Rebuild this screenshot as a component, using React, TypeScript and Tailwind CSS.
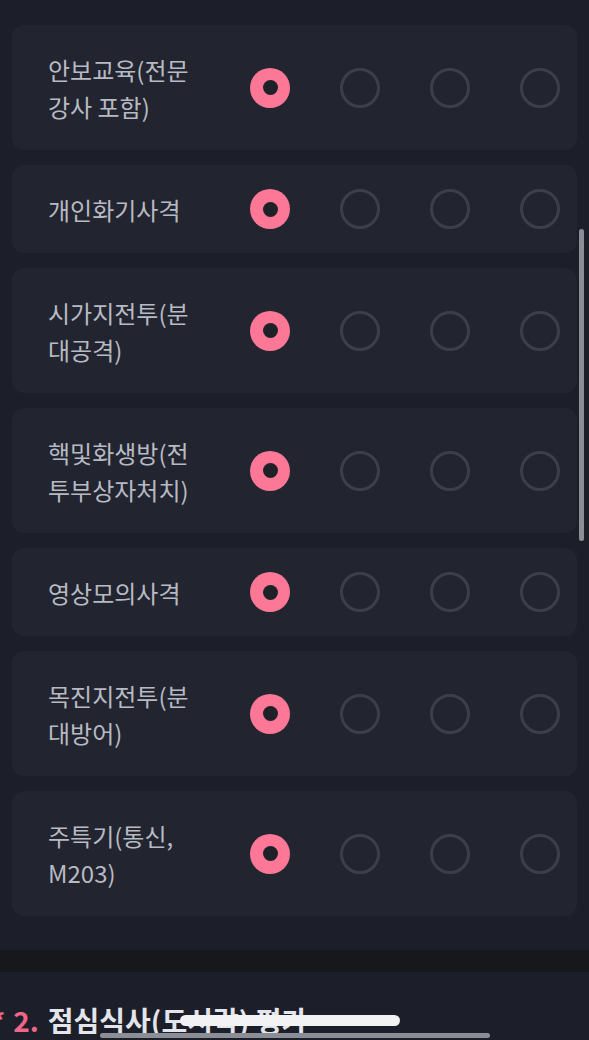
import React from "react";

const items: { label: string; sel: number }[] = [
  { label: "안보교육(전문 강사 포함)", sel: 0 },
  { label: "개인화기사격", sel: 0 },
  { label: "시가지전투(분대공격)", sel: 0 },
  { label: "핵및화생방(전투부상자처치)", sel: 0 },
  { label: "영상모의사격", sel: 0 },
  { label: "목진지전투(분대방어)", sel: 0 },
  { label: "주특기(통신, M203)", sel: 0 },
];

function Radio({ on }: { on: boolean }) {
  if (on) {
    return (
      <div className="w-[40px] h-[40px] rounded-full bg-[#fd7896] flex items-center justify-center shrink-0">
        <div className="w-[15px] h-[15px] rounded-full bg-[#1f2129]" />
      </div>
    );
  }
  return <div className="w-[40px] h-[40px] rounded-full border-[3px] border-[#3b3f49] shrink-0" />;
}

export default function App() {
  return (
    <div
      className="relative h-[1040px] overflow-hidden bg-[#1c1f29]"
      style={{ fontFamily: '"Noto Sans CJK KR", "Noto Sans", sans-serif' }}
    >
      <div className="px-3 pt-[25px] flex flex-col gap-[15px]">
        {items.map((it, i) => (
          <div
            key={i}
            className="flex items-center rounded-[12px] bg-[#22252f] pl-[36px]"
          >
            <div className="w-[150px] mr-[52px] py-[25.5px] text-[24px] leading-[37px] text-[#b7bac3]">
              {it.label}
            </div>
            <div className="flex items-center gap-[50px]">
              {[0, 1, 2, 3].map((k) => (
                <Radio key={k} on={k === it.sel} />
              ))}
            </div>
          </div>
        ))}
      </div>
      <div className="h-[34px]" />
      <div className="h-[22px] bg-[#17181c]" />
      <div className="pt-[30px] ml-[-9px] flex items-baseline text-[28px] leading-[36px] font-bold whitespace-nowrap">
        <span className="text-[#f0668a]">*</span>
        <span className="text-[#f0668a] ml-[8px]">2.</span>
        <span className="text-[#e3e5ea] ml-[9px]">점심식사(도시락) 평가</span>
      </div>

      {/* vertical scrollbar */}
      <div className="absolute left-[579px] top-[229px] w-[5px] h-[312px] rounded-full bg-[#8b8e95]" />
      {/* horizontal indicators */}
      <div className="absolute left-[180px] top-[1015px] w-[220px] h-[11px] rounded-full bg-[#f2f2f4]" />
      <div className="absolute left-[100px] top-[1033px] w-[390px] h-[5px] rounded-full bg-[#8b8e95]" />
    </div>
  );
}
